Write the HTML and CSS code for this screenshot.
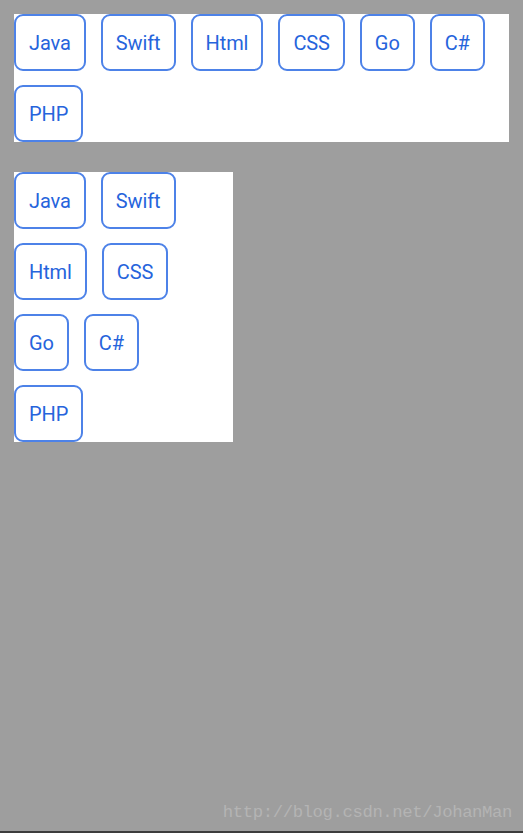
FILE: index.html
```html
<!DOCTYPE html>
<html>
<head>
<meta charset="utf-8">
<link rel="stylesheet" href="styles.css">
</head>
<body>
<div class="screen">
  <div class="flow wide">
    <span class="tag">Java</span>
    <span class="tag">Swift</span>
    <span class="tag">Html</span>
    <span class="tag">CSS</span>
    <span class="tag">Go</span>
    <span class="tag">C#</span>
    <span class="tag">PHP</span>
  </div>
  <div class="flow narrow">
    <span class="tag">Java</span>
    <span class="tag">Swift</span>
    <span class="tag">Html</span>
    <span class="tag">CSS</span>
    <span class="tag">Go</span>
    <span class="tag">C#</span>
    <span class="tag">PHP</span>
  </div>
  <div class="watermark">http://blog.csdn.net/JohanMan</div>
</div>
</body>
</html>
```
FILE: styles.css
```css
html, body {
  margin: 0;
  padding: 0;
  background: #9e9e9e;
}
.screen {
  position: relative;
  box-sizing: border-box;
  height: 833px;
  padding: 14px 14px 0 14px;
  border-bottom: 2px solid #3c3c3c;
  display: flex;
  flex-direction: column;
  align-items: flex-start;
  gap: 30px;
  font-family: Roboto, "Liberation Sans", sans-serif;
}
.flow {
  background: #ffffff;
  display: flex;
  flex-wrap: wrap;
  row-gap: 14px;
  align-content: flex-start;
}
.wide { width: 495px; }
.narrow { width: 219px; }
.tag {
  box-sizing: border-box;
  height: 57px;
  margin-right: 15px;
  padding: 1px 13px 0;
  border: 2px solid #4d82e8;
  border-radius: 9px;
  color: #2664dc;
  font-size: 20px;
  letter-spacing: -0.1px;
  display: flex;
  align-items: center;
  justify-content: center;
}
.watermark {
  position: absolute;
  right: 11px;
  bottom: 9px;
  font-family: "Liberation Mono", monospace;
  font-size: 17.3px;
  color: #b4b4b4;
  letter-spacing: -0.4px;
}
```
